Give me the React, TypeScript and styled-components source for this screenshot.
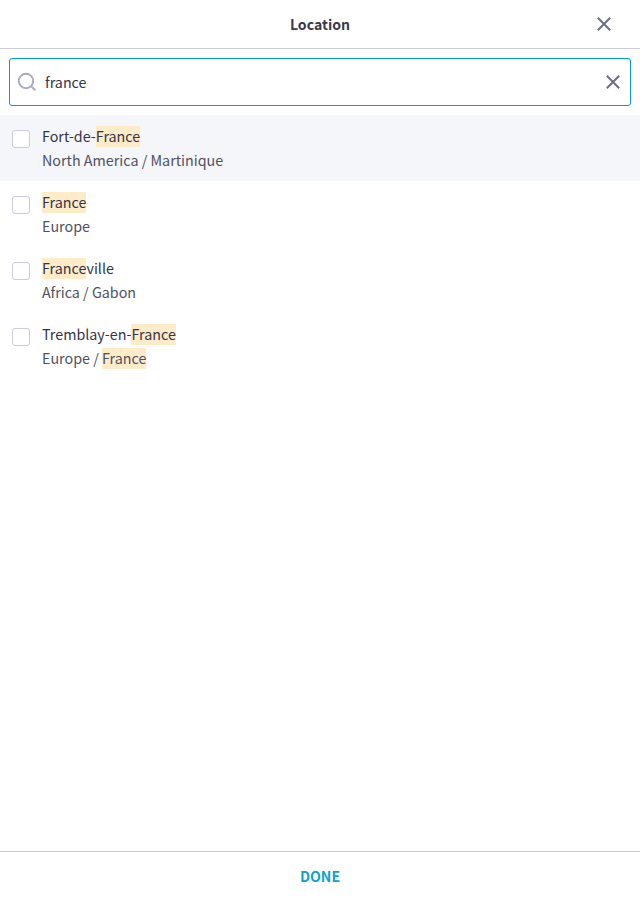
import React, { useState } from "react";
import styled, { createGlobalStyle } from "styled-components";

const GlobalStyle = createGlobalStyle`
  *, *::before, *::after { box-sizing: border-box; }
  body { margin: 0; background: #fff; }
  body, input, button {
    font-family: "Noto Sans CJK SC", sans-serif;
    font-size: 14.32px;
    line-height: 24px;
    color: #353347;
  }
`;

const Dialog = styled.div`
  display: flex;
  flex-direction: column;
  height: 100vh;
  background: #fff;
`;

const Header = styled.header`
  display: grid;
  grid-template-columns: 48px 1fr 48px;
  align-items: center;
  height: 49px;
  padding: 0 12px;
  border-bottom: 1px solid #cbcbdb;
`;

const Title = styled.h1`
  grid-column: 2;
  margin: 0;
  text-align: center;
  font-size: 14.1px;
  font-weight: 700;
  line-height: 24px;
  color: #3b394c;
`;

const IconButton = styled.button`
  display: flex;
  align-items: center;
  justify-content: center;
  justify-self: center;
  width: 24px;
  height: 24px;
  padding: 0;
  border: 0;
  background: none;
  color: #6b6e85;
`;

const SearchField = styled.label`
  display: flex;
  align-items: center;
  flex: none;
  height: 48px;
  margin: 9px;
  padding: 0 5px 0 7px;
  border: 1px solid #009fc7;
  border-radius: 3px;
`;

const SearchInput = styled.input`
  flex: 1;
  min-width: 0;
  height: 24px;
  margin-left: 8px;
  padding: 0;
  border: 0;
  outline: 0;
  background: transparent;
`;

const Results = styled.ul`
  flex: 1;
  margin: 0;
  padding: 0;
  list-style: none;
`;

const Row = styled.li<{ $active?: boolean }>`
  display: flex;
  gap: 12px;
  height: 66px;
  padding: 9px 12px;
  background: ${(p) => (p.$active ? "#f4f6fa" : "transparent")};
`;

const Checkbox = styled.input`
  appearance: none;
  flex: none;
  width: 18px;
  height: 18px;
  margin: 6px 0 0;
  border: 1px solid #cbcbdb;
  border-radius: 3px;
  background: #fff;
`;

const Place = styled.div`
  height: 24px;
`;

const Region = styled.div`
  height: 24px;
  color: #4f5064;
`;

const Mark = styled.mark`
  display: inline-block;
  height: 21px;
  line-height: 19px;
  color: inherit;
  background: #feebc8;
`;

const Footer = styled.footer`
  display: flex;
  align-items: center;
  justify-content: center;
  height: 49px;
  border-top: 1px solid #cbcbdb;
`;

const DoneButton = styled.button`
  padding: 0;
  border: 0;
  background: none;
  color: #0ba3c9;
  font-size: 14.1px;
  font-weight: 700;
`;

const CloseIcon = () => (
  <svg width="16" height="16" viewBox="0 0 16 16" fill="none" stroke="currentColor" strokeWidth="2">
    <path d="M1.8 1.8l12.4 12.4M14.2 1.8l-12.4 12.4" />
  </svg>
);

const SearchIcon = () => (
  <svg width="20" height="20" viewBox="0 0 20 20" fill="none" stroke="#a9acc0" strokeWidth="2">
    <circle cx="9" cy="9" r="7.2" />
    <path d="M14.1 14.1l4.2 4.2" />
  </svg>
);

const places = [
  { name: "Fort-de-France", region: "North America / Martinique" },
  { name: "France", region: "Europe" },
  { name: "Franceville", region: "Africa / Gabon" },
  { name: "Tremblay-en-France", region: "Europe / France" },
];

const Highlighted = ({ text }: { text: string }) => (
  <>
    {text.split(/(france)/i).map((part, i) =>
      part.toLowerCase() === "france" ? <Mark key={i}>{part}</Mark> : part
    )}
  </>
);

export default function App() {
  const [query, setQuery] = useState("france");
  return (
    <>
      <GlobalStyle />
      <Dialog>
        <Header>
          <Title>Location</Title>
          <IconButton aria-label="Close"><CloseIcon /></IconButton>
        </Header>
        <SearchField>
          <SearchIcon />
          <SearchInput value={query} onChange={(e) => setQuery(e.target.value)} />
          <IconButton aria-label="Clear" onClick={() => setQuery("")}><CloseIcon /></IconButton>
        </SearchField>
        <Results>
          {places.map((p, i) => (
            <Row key={p.name} $active={i === 0}>
              <Checkbox type="checkbox" aria-label={p.name} />
              <div>
                <Place><Highlighted text={p.name} /></Place>
                <Region><Highlighted text={p.region} /></Region>
              </div>
            </Row>
          ))}
        </Results>
        <Footer><DoneButton>DONE</DoneButton></Footer>
      </Dialog>
    </>
  );
}
